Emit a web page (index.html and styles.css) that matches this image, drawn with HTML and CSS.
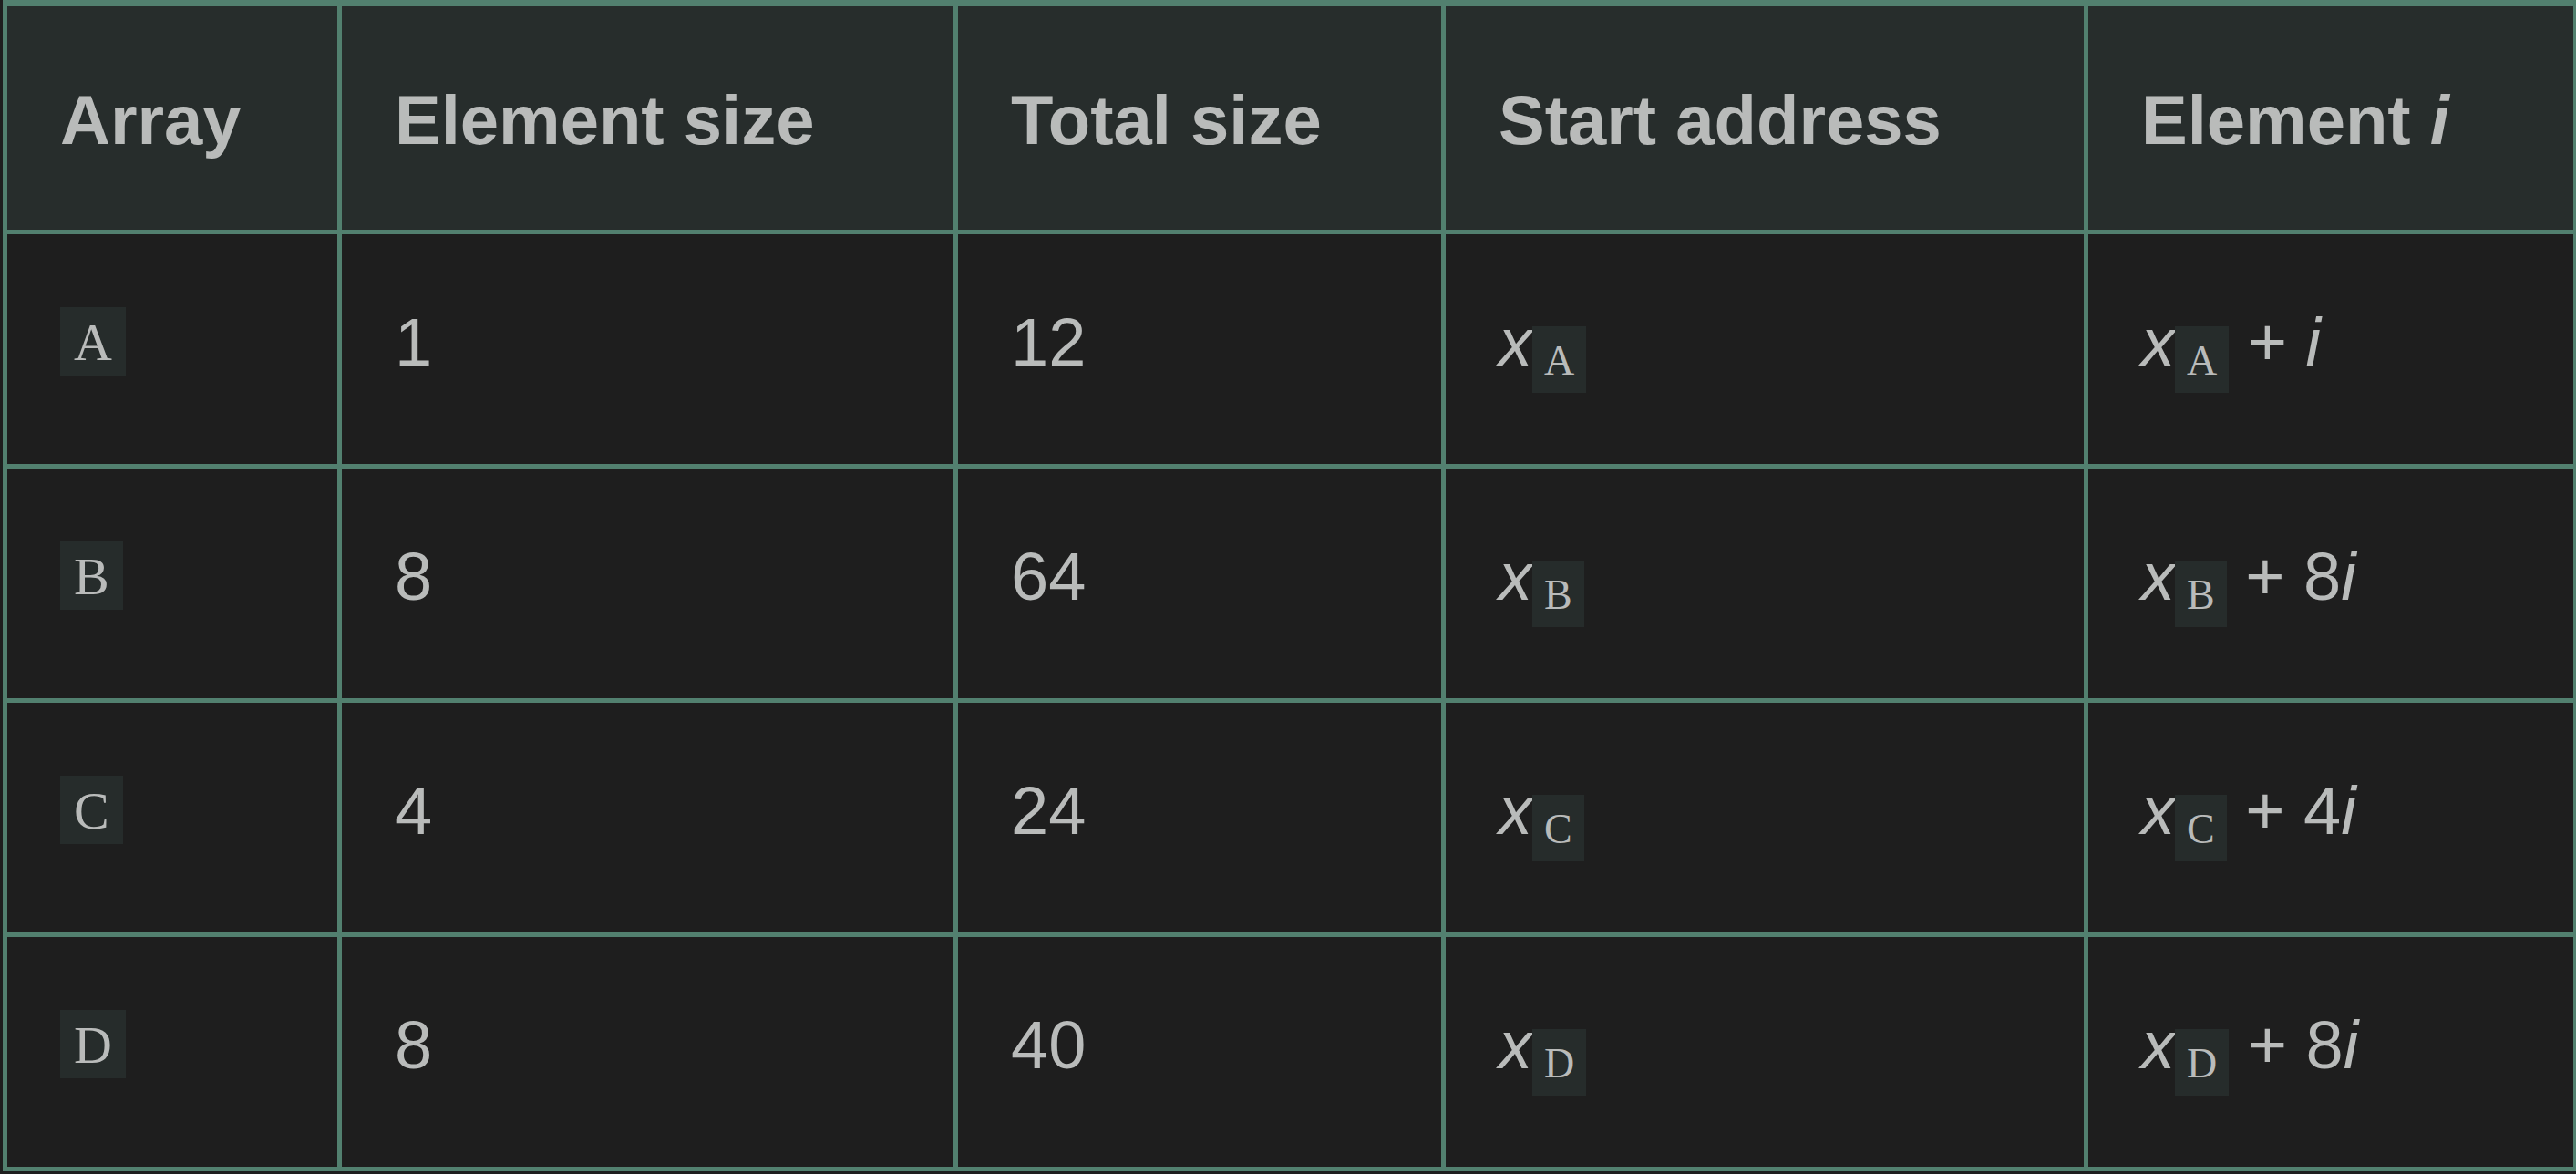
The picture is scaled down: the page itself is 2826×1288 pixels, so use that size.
FILE: index.html
```html
<!DOCTYPE html>
<html>
<head>
<meta charset="utf-8">
<link rel="stylesheet" href="styles.css">
</head>
<body>
<table class="grid">
  <colgroup>
    <col class="c1"><col class="c2"><col class="c3"><col class="c4"><col class="c5">
  </colgroup>
  <thead>
    <tr>
      <th>Array</th>
      <th>Element size</th>
      <th>Total size</th>
      <th>Start address</th>
      <th>Element <em>i</em></th>
    </tr>
  </thead>
  <tbody>
    <tr>
      <td><code class="code">A</code></td>
      <td>1</td>
      <td>12</td>
      <td><em>x</em><sub class="sub"><code class="code">A</code></sub></td>
      <td><em>x</em><sub class="sub"><code class="code">A</code></sub> + <em>i</em></td>
    </tr>
    <tr>
      <td><code class="code">B</code></td>
      <td>8</td>
      <td>64</td>
      <td><em>x</em><sub class="sub"><code class="code">B</code></sub></td>
      <td><em>x</em><sub class="sub"><code class="code">B</code></sub> + 8<em>i</em></td>
    </tr>
    <tr>
      <td><code class="code">C</code></td>
      <td>4</td>
      <td>24</td>
      <td><em>x</em><sub class="sub"><code class="code">C</code></sub></td>
      <td><em>x</em><sub class="sub"><code class="code">C</code></sub> + 4<em>i</em></td>
    </tr>
    <tr>
      <td><code class="code">D</code></td>
      <td>8</td>
      <td>40</td>
      <td><em>x</em><sub class="sub"><code class="code">D</code></sub></td>
      <td><em>x</em><sub class="sub"><code class="code">D</code></sub> + 8<em>i</em></td>
    </tr>
  </tbody>
</table>
</body>
</html>
```

FILE: styles.css
```css
html, body {
  margin: 0;
  padding: 0;
  background: #1e1e1e;
}

body {
  padding: 0 3px;
  font-family: "Liberation Sans", Arial, sans-serif;
  color: #b9bbba;
}

.grid {
  width: 2820px;
  table-layout: fixed;
  border-collapse: collapse;
  border: 5px solid #52806f;
  border-top-width: 7px;
  font-size: 74px;
}

.c1 { width: 367px; }
.c2 { width: 676px; }
.c3 { width: 535px; }
.c4 { width: 705px; }
.c5 { width: 537px; }

.grid th,
.grid td {
  border: 5px solid #52806f;
  text-align: left;
  vertical-align: middle;
  padding: 0 0 0 58px;
  line-height: 1.2;
}

.grid th {
  background: #272d2c;
  font-weight: bold;
  font-size: 76px;
  height: 241px;
  padding-top: 4px;
}

.grid td {
  background: #1e1e1e;
  height: 238px;
  padding-bottom: 14px;
}

.grid em {
  font-style: italic;
}

.code {
  font-family: "Liberation Serif", "Times New Roman", serif;
  font-size: 58px;
  background: #262c2b;
  padding: 6px 15px 4px;
  vertical-align: 6px;
}

.sub {
  font-size: 100%;
  vertical-align: -10px;
  line-height: 0;
}

.sub .code {
  font-size: 46px;
  padding: 12px 13px 10px;
  vertical-align: 0;
}
```
